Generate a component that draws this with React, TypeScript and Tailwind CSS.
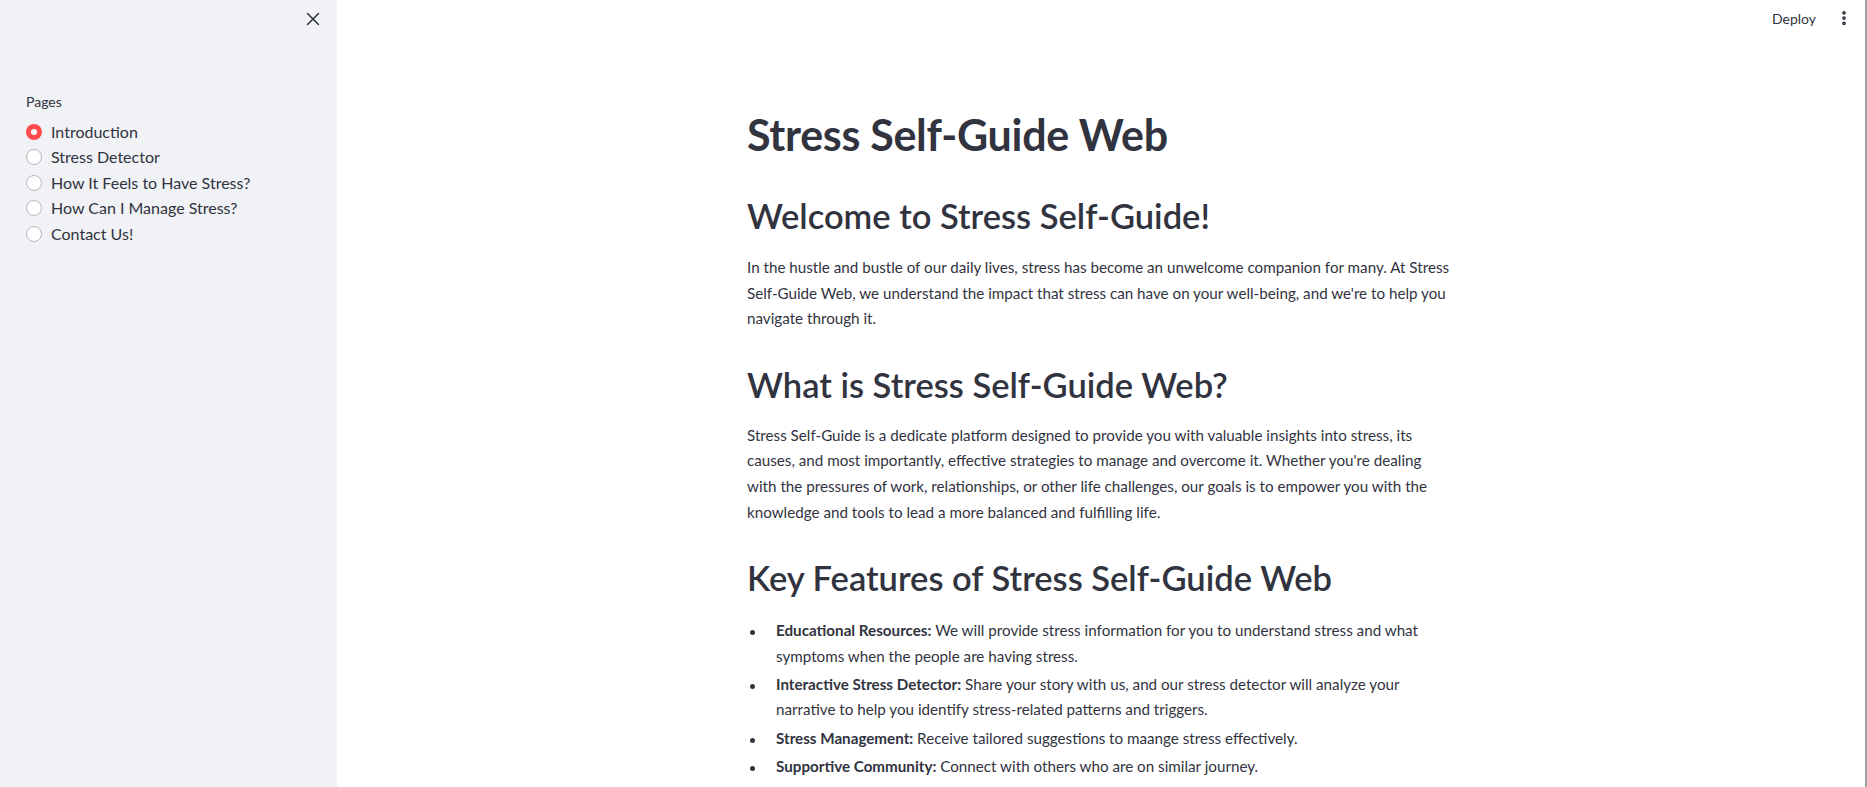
import { X, EllipsisVertical } from "lucide-react";

const pages = [
  "Introduction",
  "Stress Detector",
  "How It Feels to Have Stress?",
  "How Can I Manage Stress?",
  "Contact Us!",
];

const features = [
  {
    title: "Educational Resources:",
    text: "We will provide stress information for you to understand stress and what symptoms when the people are having stress.",
  },
  {
    title: "Interactive Stress Detector:",
    text: "Share your story with us, and our stress detector will analyze your narrative to help you identify stress-related patterns and triggers.",
  },
  {
    title: "Stress Management:",
    text: "Receive tailored suggestions to maange stress effectively.",
  },
  {
    title: "Supportive Community:",
    text: "Connect with others who are on similar journey.",
  },
];

const Sidebar = () => (
  <aside className="w-[337px] shrink-0 bg-[#f0f2f6] h-screen">
    <div className="flex justify-end pt-[8px] pr-[13px]">
      <X size={22} strokeWidth={1.6} className="text-[#31333f]" />
    </div>
    <div className="pl-[26px] mt-[63px]">
      <div className="text-[14px] text-[#31333f] leading-[18px]">Pages</div>
      <div className="mt-[8px] flex flex-col">
        {pages.map((p, i) => (
          <label key={p} className="flex items-center h-[25.5px] text-[16px] text-[#31333f]">
            {i === 0 ? (
              <span className="w-[16px] h-[16px] rounded-full bg-[#ff4b4b] flex items-center justify-center">
                <span className="w-[6px] h-[6px] rounded-full bg-white" />
              </span>
            ) : (
              <span className="w-[16px] h-[16px] rounded-full bg-white border border-[#b4b7bf]" />
            )}
            <span className="ml-[9px]">{p}</span>
          </label>
        ))}
      </div>
    </div>
  </aside>
);

const App = () => {
  return (
    <div
      className="flex h-screen overflow-hidden bg-white text-[#31333f] border-r-2 border-[#9aa3a3]"
      style={{ fontFamily: "Lato, 'Noto Sans', sans-serif" }}
    >
      <Sidebar />
      <main className="flex-1 flex flex-col min-w-0">
        <header className="h-[36px] flex items-center justify-end pr-[12px] gap-[19px]">
          <span className="text-[14px] text-[#31333f]">Deploy</span>
          <EllipsisVertical size={18} strokeWidth={3} className="text-[#31333f]" />
        </header>
        <div className="pr-[4px]">
          <div className="w-[704px] mx-auto">
            <h1 className="mt-[73px] text-[43px] font-bold leading-[52px] tracking-[-0.3px]">
              Stress Self-Guide Web
            </h1>
            <h2 className="mt-[33px] text-[34.5px] font-semibold leading-[44px]">
              Welcome to Stress Self-Guide!
            </h2>
            <p className="mt-[17px] text-[15.2px] leading-[25.6px]">
              In the hustle and bustle of our daily lives, stress has become an unwelcome companion for many. At Stress
              Self-Guide Web, we understand the impact that stress can have on your well-being, and we're to help you
              navigate through it.
            </p>
            <h2 className="mt-[31px] text-[34.5px] font-semibold leading-[44px]">
              What is Stress Self-Guide Web?
            </h2>
            <p className="mt-[16px] text-[15.2px] leading-[25.6px]">
              Stress Self-Guide is a dedicate platform designed to provide you with valuable insights into stress, its
              causes, and most importantly, effective strategies to manage and overcome it. Whether you're dealing with
              the pressures of work, relationships, or other life challenges, our goals is to empower you with the
              knowledge and tools to lead a more balanced and fulfilling life.
            </p>
            <h2 className="mt-[31px] text-[34.5px] font-semibold leading-[44px]">
              Key Features of Stress Self-Guide Web
            </h2>
            <ul className="mt-[18px] text-[15.2px] leading-[25.6px]">
              {features.map((f) => (
                <li key={f.title} className="flex items-start mb-[2.5px]">
                  <span className="w-[5px] h-[5px] mt-[12px] ml-[3px] mr-[21px] shrink-0 rounded-full bg-[#31333f]" />
                  <p>
                    <strong className="font-bold">{f.title}</strong> {f.text}
                  </p>
                </li>
              ))}
            </ul>
          </div>
        </div>
      </main>
    </div>
  );
};

export default App;
